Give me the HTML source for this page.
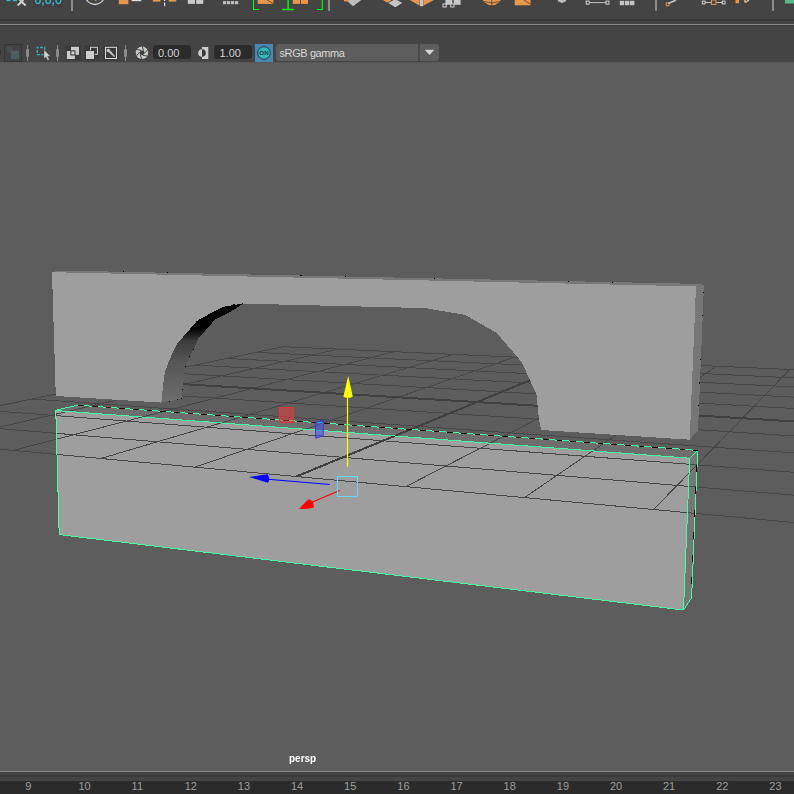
<!DOCTYPE html>
<html><head><meta charset="utf-8">
<style>
html,body{margin:0;padding:0;}
body{width:794px;height:794px;overflow:hidden;background:#444444;position:relative;font-family:"Liberation Sans",sans-serif;}
.abs{position:absolute;}
#vp{left:0;top:63px;width:794px;height:708px;background:#5d5d5d;}
#vpedge{left:0;top:62px;width:794px;height:1px;background:#585858;}
.fld{background:#2b2b2b;border-radius:3px;color:#d2d2d2;font-size:11px;height:14px;line-height:14px;top:45px;}
.num{font-size:11px;color:#9e9e9e;top:779.3px;line-height:14px;}
</style></head><body>
<!-- top shelf strip -->
<div class="abs" style="left:0;top:19px;width:794px;height:2px;background:#383838"></div>
<div class="abs" style="left:0;top:24px;width:794px;height:1px;background:#888"></div><div class="abs" style="left:0;top:25px;width:794px;height:1px;background:#414141"></div>
<!-- viewport -->
<div class="abs" id="vpedge"></div>
<div class="abs" id="vp"></div>
<!-- bottom -->
<div class="abs" style="left:0;top:771px;width:794px;height:1px;background:#8c8c8c"></div>
<div class="abs" style="left:0;top:772px;width:794px;height:9px;background:#444"></div><div class="abs" style="left:0;top:772px;width:794px;height:1px;background:#3c3c3c"></div>
<div class="abs" style="left:0;top:775px;width:794px;height:2px;background:#3a3a3a"></div>
<div class="abs" style="left:0;top:781px;width:794px;height:13px;background:#2b2b2b"></div>

<div class="abs num" style="left:25.3px">9</div>
<div class="abs num" style="left:78.4px">10</div>
<div class="abs num" style="left:131.6px">11</div>
<div class="abs num" style="left:184.7px">12</div>
<div class="abs num" style="left:237.8px">13</div>
<div class="abs num" style="left:291.0px">14</div>
<div class="abs num" style="left:344.1px">15</div>
<div class="abs num" style="left:397.3px">16</div>
<div class="abs num" style="left:450.5px">17</div>
<div class="abs num" style="left:503.6px">18</div>
<div class="abs num" style="left:556.8px">19</div>
<div class="abs num" style="left:609.9px">20</div>
<div class="abs num" style="left:663.0px">21</div>
<div class="abs num" style="left:716.2px">22</div>
<div class="abs num" style="left:769.3px">23</div>

<div class="abs" style="left:289.3px;top:753px;font-size:10px;font-weight:bold;color:#fff;line-height:12px;will-change:transform;">persp</div>
<!-- panel toolbar -->
<div class="abs fld" style="left:153px;width:38px;"><span style="position:absolute;left:5px;top:0.7px">0.00</span></div>
<div class="abs fld" style="left:214px;width:38px;"><span style="position:absolute;left:5.5px;top:0.7px">1.00</span></div>
<div class="abs" style="left:255px;top:44px;width:18px;height:18px;background:#4c86b0"></div>
<div class="abs" style="left:276px;top:44px;width:142px;height:17px;background:#5d5d5d;border-radius:3px 0 0 3px;color:#d8d8d8;font-size:11px;line-height:17px;"><span style="position:absolute;left:3.5px;top:1px;letter-spacing:-0.4px">sRGB gamma</span></div>
<div class="abs" style="left:420px;top:44px;width:19px;height:17px;background:#5d5d5d;border-radius:0 3px 3px 0;"></div>

<svg width="794" height="794" viewBox="0 0 794 794" style="position:absolute;left:0;top:0" shape-rendering="crispEdges">
<defs><clipPath id="vp"><rect x="0" y="62" width="794" height="709"/></clipPath>
<linearGradient id="inner" gradientUnits="userSpaceOnUse" x1="0" y1="300" x2="0" y2="404"><stop offset="0" stop-color="#000"/><stop offset="0.27" stop-color="#000"/><stop offset="0.40" stop-color="#3e3e3e"/><stop offset="0.6" stop-color="#565656"/><stop offset="1" stop-color="#6e6e6e"/></linearGradient>
</defs>
<g clip-path="url(#vp)">
<polygon points="55.8,410.5 689.7,458.2 683.5,610.0 59.2,534.6" fill="#9e9e9e"/>
<polygon points="55.8,410.5 78.0,405.2 697.7,450.4 689.7,458.2" fill="#6e6e6e"/>
<polygon points="689.7,458.2 697.7,450.4 691.6,598.0 683.5,610.0" fill="#767676"/>
<g stroke="#474747" stroke-width="1" fill="none">
<line x1="283.1" y1="346.7" x2="947.8" y2="376.6"/>
<line x1="256.0" y1="352.4" x2="947.8" y2="385.2"/>
<line x1="226.6" y1="358.5" x2="947.9" y2="394.7"/>
<line x1="194.7" y1="365.1" x2="948.0" y2="405.4"/>
<line x1="159.7" y1="372.4" x2="948.1" y2="417.3"/>
<line x1="79.0" y1="389.2" x2="948.3" y2="446.1"/>
<line x1="32.1" y1="399.0" x2="948.4" y2="463.8"/>
<line x1="-20.1" y1="409.8" x2="948.6" y2="484.2"/>
<line x1="-78.6" y1="422.0" x2="948.8" y2="508.2"/>
<line x1="-144.8" y1="435.8" x2="949.0" y2="536.8"/>
<line x1="283.1" y1="346.7" x2="-144.8" y2="435.8"/>
<line x1="337.5" y1="349.2" x2="-68.4" y2="442.8"/>
<line x1="394.2" y1="351.7" x2="13.3" y2="450.4"/>
<line x1="453.2" y1="354.4" x2="100.8" y2="458.5"/>
<line x1="514.8" y1="357.1" x2="194.9" y2="467.2"/>
<line x1="646.2" y1="363.0" x2="405.8" y2="486.6"/>
<line x1="716.4" y1="366.2" x2="524.5" y2="497.6"/>
<line x1="789.9" y1="369.5" x2="653.6" y2="509.5"/>
<line x1="867.0" y1="372.9" x2="794.5" y2="522.5"/>
<line x1="947.8" y1="376.6" x2="949.0" y2="536.8"/>
</g>
<g stroke="#404040" stroke-width="2" fill="none">
<line x1="121.3" y1="380.4" x2="948.2" y2="430.8"/>
<line x1="579.1" y1="360.0" x2="296.3" y2="476.5"/>
</g>
<polygon points="161.3,402.6 163.6,380.7 165.1,371.6 169.6,359.5 177.2,343.6 187.8,331.6 196.8,321.0 210.5,313.4 224.0,306.6 242.2,303.6 242.2,304.4 230.0,311.9 215.0,319.5 205.9,330.0 198.4,338.4 193.8,348.9 190.0,356.5 185.5,366.3 184.0,374.6 182.5,389.7 181.7,398.8" fill="url(#inner)"/>
<polygon points="52.0,272.0 696.0,286.4 689.7,439.7 541.0,430.0 538.7,417.0 536.4,394.3 521.7,362.1 496.8,333.1 465.0,314.9 425.3,308.1 242.2,303.6 224.0,306.6 210.5,313.4 196.8,321.0 187.8,331.6 177.2,343.6 169.6,359.5 165.1,371.6 163.6,380.7 161.3,402.6 55.8,396.0" fill="#9e9e9e"/>
<polygon points="696.0,286.4 704.0,284.5 698.0,430.0 689.7,439.7" fill="#767676"/>
<polygon points="52.0,271.6 74.0,270.8 704.0,284.0 696.0,286.4 52.0,272.2" fill="#787878"/>
<rect x="123.0" y="270.6" width="1.2" height="1.2" fill="#000"/>
<rect x="166.9" y="271.7" width="1.2" height="1.2" fill="#000"/>
<rect x="300.4" y="274.8" width="1.2" height="1.2" fill="#000"/>
<rect x="345.0" y="275.8" width="1.2" height="1.2" fill="#000"/>
<rect x="433.8" y="277.6" width="1.2" height="1.2" fill="#000"/>
<rect x="567.5" y="280.6" width="1.2" height="1.2" fill="#000"/>
<rect x="611.7" y="281.8" width="1.2" height="1.2" fill="#000"/>
<rect x="702.7" y="291.7" width="1.2" height="1.2" fill="#000"/>
<rect x="701.9" y="314.8" width="1.2" height="1.2" fill="#000"/>
<rect x="699.9" y="359.0" width="1.2" height="1.2" fill="#000"/>
<rect x="698.8" y="382.4" width="1.2" height="1.2" fill="#000"/>
<rect x="698.1" y="404.8" width="1.2" height="1.2" fill="#000"/>
<rect x="180.7" y="397.6" width="1.2" height="1.2" fill="#000"/>
<rect x="176.6" y="398.5" width="1.2" height="1.2" fill="#000"/>
<rect x="168.7" y="400.9" width="1.2" height="1.2" fill="#000"/>
<rect x="181.9" y="389.1" width="1.2" height="1.2" fill="#000"/>
<rect x="184.7" y="365.7" width="1.2" height="1.2" fill="#000"/>
<rect x="189.2" y="355.9" width="1.2" height="1.2" fill="#000"/>
<rect x="193.0" y="348.6" width="1.2" height="1.2" fill="#000"/>
<rect x="241.6" y="303.2" width="1.2" height="1.2" fill="#000"/>
<rect x="233.4" y="303.9" width="1.2" height="1.2" fill="#000"/>
<g stroke="#43ffa3" stroke-width="1" fill="none" shape-rendering="crispEdges">
<polygon points="55.8,410.5 689.7,458.2 683.5,610.0 59.2,534.6"/>
<polyline points="55.8,410.5 62.7,408.5 78.0,405.2 697.7,450.4 689.7,458.2"/>
<polyline points="697.7,450.4 691.6,598.0 683.5,610.0"/>
</g>
<g stroke="#000" stroke-width="1" fill="none" shape-rendering="crispEdges">
<line x1="78.5" y1="405.25" x2="697.7" y2="450.4" stroke-dasharray="5.5 8.2"/>
<line x1="696.6" y1="465" x2="691.1" y2="598" stroke-dasharray="7 15.5"/>
</g>
<g shape-rendering="auto">
<rect x="279.5" y="407.5" width="14" height="15" fill="rgba(235,60,60,0.55)" stroke="#e03838" stroke-width="1"/>
<polygon points="315.6,422.5 323.2,420 323.2,435.6 315.6,438.2" fill="rgba(70,80,230,0.55)" stroke="#3838e8" stroke-width="1"/>
<line x1="347.5" y1="466.8" x2="347.5" y2="397" stroke="#ffff00" stroke-width="1.2"/>
<path d="M348.2,376 L352.8,396.5 Q348,399.5 343.4,396.5 Z" fill="#ffff00"/>
<line x1="329.7" y1="484.5" x2="268" y2="479.2" stroke="#0000ff" stroke-width="1.1"/>
<path d="M249,476.9 L267.5,474.2 Q270.5,478.5 268,482.8 Z" fill="#0000ff"/>
<line x1="339.7" y1="490.6" x2="312" y2="502.3" stroke="#ff0000" stroke-width="1.1"/>
<path d="M299,508.8 L308.5,499.2 Q313.5,499.5 314,507.5 Q308,509.5 299,508.8 Z" fill="#ff0000"/>
<rect x="337.5" y="476.5" width="20" height="20" fill="none" stroke="#66d9ff" stroke-width="1"/>
<rect x="347" y="486" width="1" height="1" fill="#66d9ff"/>
</g>
</g>
</svg>
<svg width="794" height="63" viewBox="0 0 794 63" style="position:absolute;left:0;top:0">
<!-- ===== top shelf fragments ===== -->
<g>
<rect x="6.5" y="0" width="4" height="1.2" fill="#38b4cc"/><rect x="13" y="0" width="4" height="1.2" fill="#38b4cc"/>
<path d="M19.6,0 L25.7,5.5 M23.4,0 L17.6,5.5" stroke="#cdcdcd" stroke-width="2" fill="none"/>
<rect x="33" y="0" width="29.5" height="7" fill="#3e3e3e"/>
<text x="34.4" y="3.8" font-family="Liberation Sans, sans-serif" font-size="12.3" fill="#3cb8d0" stroke="#3cb8d0" stroke-width="0.35">0,0,0</text>
<rect x="71" y="0" width="2" height="11" fill="#8c8c8c"/>
<circle cx="94.9" cy="-5.3" r="9.8" fill="none" stroke="#d0d0d0" stroke-width="1.3"/>
<rect x="95" y="0" width="1.4" height="0.9" fill="#e8964a"/>
<rect x="118.8" y="0" width="9.6" height="4.2" fill="#e8964a"/>
<rect x="131.6" y="0" width="9.7" height="1.2" fill="#dcdcdc"/>
<rect x="152.8" y="0" width="7.6" height="1.6" fill="#e8964a"/><rect x="168.7" y="0" width="7.6" height="1.6" fill="#e8964a"/>
<rect x="164" y="0" width="1.2" height="1" fill="#e0e0e0"/><rect x="164" y="2.5" width="1.2" height="3.7" fill="#e0e0e0"/>
<rect x="187.8" y="0" width="7.2" height="3.9" fill="#c8c8c8"/><rect x="196.1" y="0" width="7.2" height="3.9" fill="#c8c8c8"/>
<rect x="223" y="1.1" width="3.2" height="3.1" fill="#c0c0c0"/><rect x="227" y="1.1" width="3.2" height="3.1" fill="#c0c0c0"/><rect x="231" y="1.1" width="3.2" height="3.1" fill="#c0c0c0"/><rect x="235" y="1.1" width="3.2" height="3.1" fill="#c0c0c0"/>
<path d="M253.5,0 V9.5 H259" stroke="#00ff00" stroke-width="1.1" fill="none"/>
<rect x="257.7" y="0" width="15.7" height="3.9" fill="#e8964a"/><path d="M267,0 L273.4,3.5" stroke="#5a4030" stroke-width="0.8"/>
<path d="M288.1,0 V9.5 M282.1,9.5 H293.9" stroke="#00ff00" stroke-width="1.4" fill="none"/>
<rect x="292.8" y="0" width="7.3" height="3.9" fill="#e8964a"/><rect x="301" y="0" width="7" height="3.9" fill="#e8964a"/>
<path d="M322.3,0 V9.5 H317" stroke="#00ff00" stroke-width="1.1" fill="none"/>
<rect x="328" y="0" width="2" height="10.8" fill="#8c8c8c"/>
<polygon points="346,0 361.3,0 353,6.2" fill="#bdbdbd"/><rect x="344" y="0" width="4.5" height="1.4" fill="#e8964a"/>
<polygon points="382.8,0 391,0 391,1 387,2.6" fill="#e8964a"/>
<polygon points="388.3,3 395.3,-1 402.3,3 395.3,7.2" fill="#c4c4c4"/>
<polygon points="409.8,0 419.5,0 419.5,5.5" fill="#e8964a"/><polygon points="423.7,0 434,0 423.7,5.5" fill="#e8964a"/>
<rect x="419.8" y="0" width="3.6" height="6.2" fill="#c4c4c4"/>
<rect x="445.4" y="0" width="6.9" height="4.8" fill="#c8c8c8"/><rect x="453.7" y="0" width="6.9" height="4.8" fill="#c8c8c8"/>
<rect x="443" y="4" width="3.2" height="3" fill="#444" stroke="#e0e0e0" stroke-width="0.9"/><rect x="450.8" y="4" width="3.2" height="3" fill="#444" stroke="#e0e0e0" stroke-width="0.9"/>
<circle cx="491.8" cy="-5" r="10.3" fill="#e8964a"/><path d="M491.8,0 V5.3 M484,1.5 Q491.8,4.5 499.6,1.5" stroke="#5a4030" stroke-width="0.8" fill="none"/>
<rect x="514.7" y="0" width="15.9" height="5.3" fill="#e8964a"/><path d="M524,0 L530.6,4.3" stroke="#5a4030" stroke-width="0.8"/>
<polygon points="557.9,0 566.1,0 566.1,1.2 562,3 557.9,1.2" fill="#bdbdbd"/>
<path d="M589.4,2.6 H605.7" stroke="#d0d0d0" stroke-width="0.9"/>
<rect x="586.2" y="1.1" width="3" height="3" fill="#444" stroke="#e0e0e0" stroke-width="0.9"/><rect x="606" y="1.1" width="3" height="3" fill="#444" stroke="#e0e0e0" stroke-width="0.9"/>
<rect x="619.8" y="0.8" width="4.4" height="4.4" fill="#c4c4c4"/><rect x="625" y="0.8" width="4.4" height="4.4" fill="#c4c4c4"/><rect x="630" y="0.8" width="4.4" height="4.4" fill="#c4c4c4"/>
<rect x="655" y="0" width="2" height="10.9" fill="#8c8c8c"/>
<rect x="666.3" y="2.9" width="2.6" height="2.9" fill="none" stroke="#e8964a" stroke-width="0.9"/><path d="M668.5,3.5 L676,0" stroke="#c4c4c4" stroke-width="1.6"/>
<path d="M705,2.5 H711 M716.3,2.5 H722" stroke="#d0d0d0" stroke-width="0.9"/>
<rect x="702.3" y="1.1" width="2.8" height="2.8" fill="#444" stroke="#e0e0e0" stroke-width="0.9"/><rect x="722.2" y="1.1" width="2.8" height="2.8" fill="#444" stroke="#e0e0e0" stroke-width="0.9"/>
<rect x="711.5" y="0" width="4.4" height="4.4" fill="#444" stroke="#e8964a" stroke-width="1"/>
<rect x="735.5" y="0" width="3.5" height="3.2" fill="#e8964a"/>
<rect x="744" y="0" width="2" height="2.6" fill="#e8964a"/><path d="M745.5,2.5 L749,0" stroke="#c4c4c4" stroke-width="1.4"/>
<rect x="772" y="0" width="2" height="10.9" fill="#8c8c8c"/>
<rect x="785" y="0" width="9" height="3.5" fill="#58b888"/>
</g>
<!-- ===== panel toolbar ===== -->
<rect x="0" y="50" width="0.8" height="5" fill="#333"/>
<rect x="4.5" y="44.5" width="17" height="17" fill="#424242" stroke="#353535" stroke-width="1"/>
<rect x="7.1" y="47" width="5.8" height="5.5" fill="#475052"/>
<rect x="10.9" y="50.7" width="8.1" height="8.3" fill="#4c5e62"/>
<g fill="#8a8a8a">
<rect x="27" y="45" width="1" height="16"/><rect x="26" y="49" width="3" height="8" rx="1"/>
<rect x="57" y="45" width="1" height="16"/><rect x="56" y="49" width="3" height="8" rx="1"/>
<rect x="125" y="45" width="1" height="16"/><rect x="124" y="49" width="3" height="8" rx="1"/>
</g>
<!-- select icon -->
<rect x="37.3" y="47.5" width="7.4" height="7.2" fill="none" stroke="#38b8d0" stroke-width="1.3" stroke-dasharray="2.6 1.6" stroke-dashoffset="1.3"/>
<path d="M44,49.8 L44,58.6 L46,56.9 L47.7,60.4 L49.3,59.6 L47.6,56.2 L50.2,56 Z" fill="#d2d2d2" stroke="#444" stroke-width="0.4"/>
<!-- icon 5 -->
<rect x="65.3" y="45.2" width="15.7" height="15.3" fill="#3a3a3a"/>
<rect x="71" y="46.8" width="8" height="8" fill="#cccccc"/>
<rect x="66.9" y="51" width="8" height="8" fill="#cccccc"/>
<rect x="70.3" y="50.3" width="5.2" height="5.2" fill="#3a3a3a"/>
<rect x="71.4" y="51.4" width="3" height="3" fill="#d4d4d4"/>
<!-- icon 6 -->
<rect x="84.3" y="45.2" width="15.2" height="15.3" fill="#3a3a3a"/>
<rect x="90.5" y="47.3" width="7" height="7" fill="none" stroke="#cccccc" stroke-width="1"/>
<rect x="85.4" y="50.4" width="9.2" height="9.2" fill="#3a3a3a"/>
<rect x="86" y="51" width="8" height="8" fill="#cccccc"/>
<!-- icon 7 -->
<rect x="103.2" y="45.2" width="15.4" height="15.3" fill="#3a3a3a"/>
<rect x="105.5" y="47.3" width="11" height="11.2" fill="none" stroke="#dddddd" stroke-width="1"/>
<circle cx="108.3" cy="50.5" r="1.8" fill="#c4c4c4"/>
<path d="M108.6,52.2 L110.3,50.6 L115.1,56.2 L114.3,57 Z" fill="#c4c4c4"/>
<!-- aperture -->
<circle cx="142" cy="52.8" r="6.2" fill="#cccccc"/>
<polygon points="144.66,53.27 142.92,55.34 140.26,54.87 139.34,52.33 141.08,50.26 143.74,50.73" fill="#3e3e3e"/>
<g stroke="#444" stroke-width="1"><path d="M144.66,53.27 L147.48,49.90"/><path d="M142.92,55.34 L147.25,56.10"/><path d="M140.26,54.87 L141.77,59.00"/><path d="M139.34,52.33 L136.52,55.70"/><path d="M141.08,50.26 L136.75,49.50"/><path d="M143.74,50.73 L142.23,46.60"/></g>
<!-- contrast -->
<rect x="202" y="47" width="6.3" height="12" fill="#cccccc"/>
<path d="M202,49.2 A3.8,3.8 0 0 0 202,56.8 Z" fill="#cccccc"/>
<path d="M202,49.2 A3.8,3.8 0 0 1 202,56.8 Z" fill="#3a3a3a"/>
<!-- ON -->
<circle cx="264" cy="53" r="6.3" fill="#30b8b8" stroke="#243844" stroke-width="1"/>
<text x="264" y="55.2" text-anchor="middle" font-family="Liberation Sans, sans-serif" font-weight="bold" font-size="6.2" fill="#1c3040">ON</text>
<!-- dropdown arrow -->
<rect x="418" y="44" width="2" height="17" fill="#4a4a4a"/>
<polygon points="424.8,49.7 434.2,49.7 429.5,55" fill="#d4d4d4"/>
</svg>

</body></html>
